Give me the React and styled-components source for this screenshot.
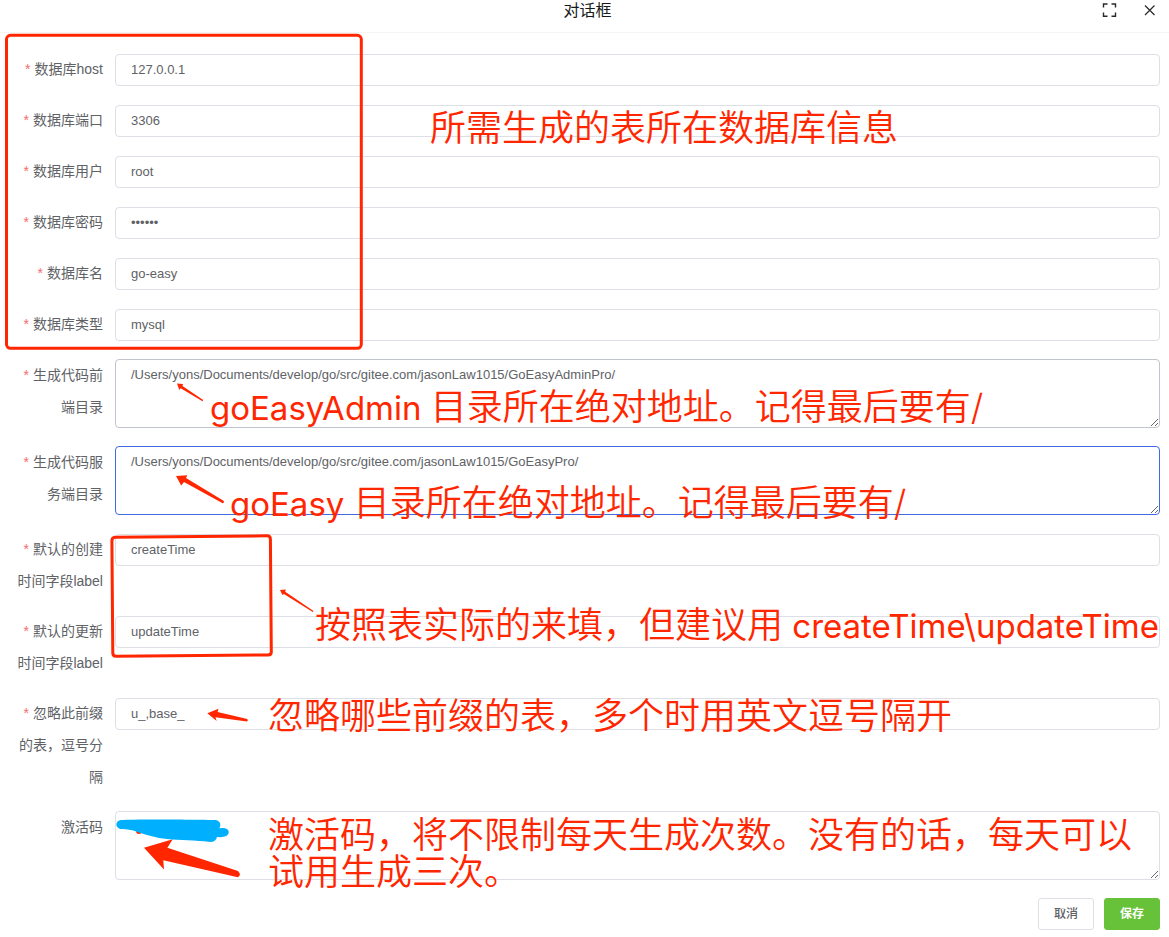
import React from "react";
import styled, { createGlobalStyle } from "styled-components";

const GlobalStyle = createGlobalStyle`
  *, *::before, *::after { box-sizing: border-box; }
  body {
    margin: 0;
    background: #fff;
    color: #606266;
    font-family: "Liberation Sans", "Noto Sans CJK SC", sans-serif;
    font-size: 14px;
  }
`;

const Dialog = styled.main`
  position: relative;
  overflow: hidden;
`;

const Header = styled.header`
  display: grid;
  grid-template-columns: 1fr auto 1fr;
  align-items: start;
  height: 33px;
  padding: 0 9px 0 15px;
  border-bottom: 1px solid #f5f5f6;
`;

const Title = styled.h1`
  grid-column: 2;
  margin: 0;
  font-size: 16px;
  font-weight: 400;
  line-height: 22px;
  color: #17181a;
`;

const HeaderActions = styled.div`
  display: flex;
  justify-content: flex-end;
  gap: 20px;
`;

const IconButton = styled.button`
  display: flex;
  width: 20px;
  height: 20px;
  padding: 0;
  border: 0;
  background: none;
  color: #26282b;
`;

const Form = styled.form`
  display: flex;
  flex-direction: column;
  gap: 18px;
  padding: 20px 9px 7px 15px;
`;

const Row = styled.div`
  display: flex;
  align-items: flex-start;
  gap: 12px;
  min-height: 33px;
`;

const Label = styled.label`
  flex: 0 0 88px;
  line-height: 32px;
  text-align: right;

  &::before {
    content: ${(p) => (p.$required ? '"*"' : "none")};
    margin-right: 4px;
    color: #f56c6c;
  }
`;

const fieldLook = `
  flex: 1;
  min-width: 0;
  margin: 0;
  border-radius: 4px;
  background: #fff;
  color: #606266;
  font-family: inherit;
  font-size: 13px;
  outline: none;
`;

const Input = styled.input`
  ${fieldLook}
  height: 32px;
  margin-top: 1px;
  padding: 0 15px 2px;
  border: 1px solid #dcdfe6;
`;

const borders = { idle: "#dcdfe6", hover: "#c0c4cc", active: "#4169e1" };

const TextArea = styled.textarea`
  ${fieldLook}
  display: block;
  height: 69px;
  padding: 5px 15px;
  border: 1px solid ${(p) => borders[p.$tone]};
  line-height: 20px;
  resize: vertical;
`;

const Footer = styled.footer`
  display: flex;
  justify-content: flex-end;
  gap: 10px;
`;

const Button = styled.button`
  width: 56px;
  height: 32px;
  padding: 0 0 2px;
  border: 1px solid ${(p) => (p.$primary ? "#67c23a" : "#dcdfe6")};
  border-radius: 3px;
  background: ${(p) => (p.$primary ? "#67c23a" : "#fff")};
  color: ${(p) => (p.$primary ? "#fff" : "#606266")};
  font-family: "Noto Sans CJK SC", sans-serif;
  font-size: 12px;
  line-height: 20px;
  font-weight: ${(p) => (p.$primary ? 700 : 500)};
`;

const Ink = styled.svg`
  position: absolute;
  top: 0;
  left: 0;
  overflow: visible;
  pointer-events: none;
`;

const Note = styled.p`
  position: absolute;
  top: ${(p) => p.$top}px;
  left: ${(p) => p.$left}px;
  margin: 0;
  color: #ff2600;
  font-family: Inter, "Noto Sans CJK SC", sans-serif;
  font-size: 36px;
  font-weight: 350;
  line-height: 37px;
  white-space: nowrap;
  pointer-events: none;
`;

const Latin = styled.span`
  font-family: Inter, sans-serif;
  font-size: 33px;
  font-weight: 400;
`;

const fields = [
  { id: "host", label: "数据库host", value: "127.0.0.1", required: true },
  { id: "port", label: "数据库端口", value: "3306", required: true },
  { id: "user", label: "数据库用户", value: "root", required: true },
  { id: "password", label: "数据库密码", value: "123456", type: "password", required: true },
  { id: "name", label: "数据库名", value: "go-easy", required: true },
  { id: "type", label: "数据库类型", value: "mysql", required: true },
  {
    id: "front",
    label: "生成代码前端目录",
    value: "/Users/yons/Documents/develop/go/src/gitee.com/jasonLaw1015/GoEasyAdminPro/",
    tone: "hover",
    required: true,
  },
  {
    id: "server",
    label: "生成代码服务端目录",
    value: "/Users/yons/Documents/develop/go/src/gitee.com/jasonLaw1015/GoEasyPro/",
    tone: "active",
    required: true,
  },
  { id: "created", label: "默认的创建时间字段label", value: "createTime", required: true },
  { id: "updated", label: "默认的更新时间字段label", value: "updateTime", required: true },
  { id: "prefix", label: "忽略此前缀的表，逗号分隔", value: "u_,base_", required: true },
  { id: "code", label: "激活码", value: "", tone: "idle" },
];

function Field({ id, label, value, type = "text", tone, required }) {
  return (
    <Row>
      <Label htmlFor={id} $required={required}>{label}</Label>
      {tone ? (
        <TextArea id={id} $tone={tone} defaultValue={value} spellCheck={false} />
      ) : (
        <Input id={id} type={type} defaultValue={value} />
      )}
    </Row>
  );
}

function Markup() {
  return (
    <>
      <Ink width="400" height="900" viewBox="0 0 400 900" aria-hidden="true">
        <g fill="none" stroke="#ff2600" strokeWidth="3" strokeLinejoin="round">
          <rect x="6.5" y="35.3" width="354.8" height="313" rx="4" />
          <path d="M115 537.3 L267 535.8 Q270.3 535.8 270.4 539 L271.3 652 Q271.3 655 268 655 L116 656.3 Q112.8 656.3 112.8 653 L111.9 541 Q111.9 537.4 115 537.3Z" />
        </g>
        <g fill="#ff2600">
          <path d="M177 383.5 L183 384 L182.5 386 L203.2 399.9 L202.5 401.2 L180.7 388.3 L179.3 390Z" />
          <path d="M176 476 L187.3 475.2 L186 478 L223.5 500.8 Q224.8 502.4 222.7 503.2 L184 482 L181.2 485.5Z" />
          <path d="M280 590 L285.8 589.6 L285.2 591.8 L313.5 611 L312.8 612 L283.9 594 L282.5 595Z" />
          <path d="M207.3 713.3 L218.5 708.8 L217.6 712.1 L247.3 719 Q248.6 720.6 247 721.4 L215.4 717.2 L216.7 721Z" />
          <path d="M144 847.7 L172.7 839.3 L167.4 847.8 L238 871 Q242 875 237.8 877.2 L163.3 860.3 L164 869.6Z" />
          <circle cx="139" cy="831" r="3" />
        </g>
        <path
          fill="#00b0ff"
          d="M121 820 C132 819 195 819.5 216 820 Q221 821.5 220.3 826 L219.4 828.2 Q229 827 228.8 832.6 Q228 838 217 837 Q216 842 210 842 C195 840 180 840.5 167 839 C156 838 147 835 139 832.5 C133 830 128 829.2 120 829 Q116 827 116.4 824 Q117 820.6 121 820Z"
        />
      </Ink>
      <Note $top={110} $left={430}>所需生成的表所在数据库信息</Note>
      <Note $top={389} $left={210}><Latin>goEasyAdmin </Latin>目录所在绝对地址。记得最后要有/</Note>
      <Note $top={485} $left={230}><Latin>goEasy </Latin>目录所在绝对地址。记得最后要有/</Note>
      <Note $top={607} $left={315}>按照表实际的来填，但建议用<Latin> createTime\updateTime</Latin></Note>
      <Note $top={698} $left={268}>忽略哪些前缀的表，多个时用英文逗号隔开</Note>
      <Note $top={817} $left={268}>
        激活码，将不限制每天生成次数。没有的话，每天可以<br />试用生成三次。
      </Note>
    </>
  );
}

export default function App() {
  return (
    <>
      <GlobalStyle />
      <Dialog>
        <Header>
          <span />
          <Title>对话框</Title>
          <HeaderActions>
            <IconButton type="button" aria-label="全屏">
              <svg width="20" height="20" viewBox="0 0 20 20" fill="none" stroke="currentColor" strokeWidth="1.4">
                <path d="M3.5 7.5V4H7.5 M11.5 4H15.5V7.5 M15.5 12.5V16.3H11.5 M7.5 16.3H3.5V12.5" />
              </svg>
            </IconButton>
            <IconButton type="button" aria-label="关闭">
              <svg width="20" height="20" viewBox="0 0 20 20" fill="none" stroke="currentColor" strokeWidth="1.2">
                <path d="M5 5.5L14.5 15M14.5 5.5L5 15" />
              </svg>
            </IconButton>
          </HeaderActions>
        </Header>
        <Form onSubmit={(e) => e.preventDefault()}>
          {fields.map((f) => <Field key={f.id} {...f} />)}
          <Footer>
            <Button type="button">取消</Button>
            <Button type="submit" $primary>保存</Button>
          </Footer>
        </Form>
        <Markup />
      </Dialog>
    </>
  );
}
